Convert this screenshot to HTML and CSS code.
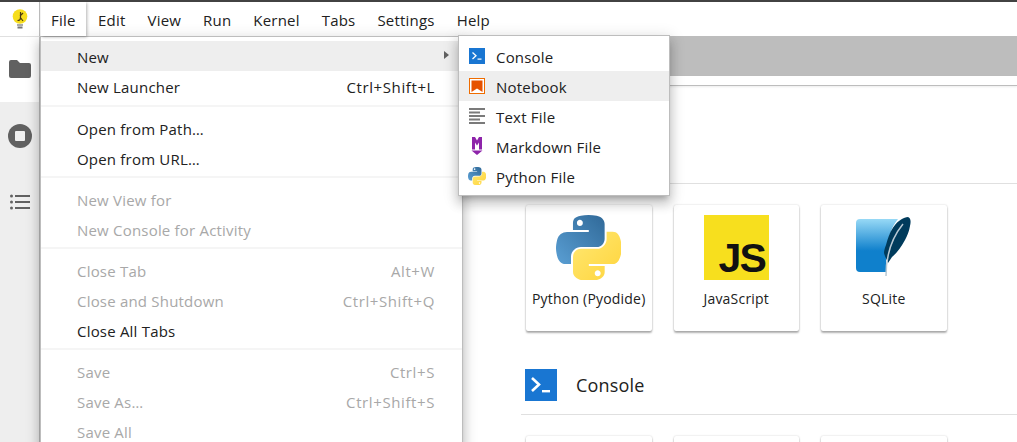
FILE: index.html
```html
<!DOCTYPE html>
<html lang="en">
<head>
<meta charset="utf-8">
<title>JupyterLite</title>
<link rel="stylesheet" href="styles.css">
</head>
<body>
<svg class="defs" width="0" height="0" aria-hidden="true">
  <defs>
    <linearGradient id="pyBlue" x1="0" y1="1" x2="1" y2="0"><stop offset="0" stop-color="#5a9fd4"/><stop offset="1" stop-color="#306998"/></linearGradient>
    <linearGradient id="pyYellow" x1="0" y1="0" x2="1" y2="1"><stop offset="0" stop-color="#ffe873"/><stop offset="1" stop-color="#ffd43b"/></linearGradient>
    <linearGradient id="sqBlue" x1="0" y1="0" x2="0" y2="1"><stop offset="0" stop-color="#97d9f6"/><stop offset=".6" stop-color="#0f80cc"/><stop offset="1" stop-color="#0f80cc"/></linearGradient>
    <symbol id="python" viewBox="0 0 110 110">
      <path fill="url(#pyBlue)" d="M54.919 0.001c-4.584 0.022-8.961 0.413-12.813 1.095C30.76 3.099 28.7 7.295 28.7 15.032v10.219h26.813v3.406H28.7H18.638c-7.793 0-14.616 4.684-16.75 13.594-2.462 10.213-2.571 16.586 0 27.25 1.906 7.938 6.458 13.594 14.25 13.594h9.219V70.845c0-8.85 7.657-16.656 16.75-16.656h26.781c7.455 0 13.406-6.138 13.406-13.625V15.032c0-7.266-6.13-12.725-13.406-13.937C64.282 0.328 59.502-0.02 54.919 0.001zm-14.5 8.219c2.77 0 5.031 2.299 5.031 5.125 0 2.816-2.262 5.094-5.031 5.094-2.779 0-5.031-2.277-5.031-5.094 0-2.826 2.252-5.125 5.031-5.125z"/>
      <path fill="url(#pyYellow)" d="M85.638 28.657V40.47c0 9.157-7.763 16.844-16.625 16.844H42.2c-7.344 0-13.406 6.285-13.406 13.625v25.531c0 7.266 6.319 11.54 13.406 13.625 8.487 2.496 16.625 2.947 26.781 0 6.75-1.955 13.406-5.888 13.406-13.625V86.251H55.575v-3.406h26.812 13.406c7.793 0 10.696-5.436 13.406-13.594 2.799-8.399 2.68-16.476 0-27.25-1.926-7.757-5.604-13.594-13.406-13.594H85.638zM70.575 93.313c2.779 0 5.031 2.277 5.031 5.094 0 2.826-2.252 5.125-5.031 5.125-2.77 0-5.031-2.299-5.031-5.125 0-2.816 2.262-5.094 5.031-5.094z"/>
    </symbol>
    <symbol id="console" viewBox="0 0 32 32">
      <rect width="32" height="32" fill="#1976d2"/>
      <path fill="none" stroke="#fff" stroke-width="2.6" d="M7 9l7 6.500-7 6.500"/>
      <rect x="17" y="21" width="8" height="2.400" fill="#fff"/>
    </symbol>
  </defs>
</svg>
<div class="app">
  <div class="topbar">
    <div class="logo-cell">
      <svg class="logo" viewBox="0 0 16 20" width="16" height="20">
        <circle cx="8" cy="7.500" r="7.300" fill="#f6dd1c"/>
        <rect x="5" y="15" width="6" height="2" fill="#aaa"/>
        <rect x="5.500" y="17.500" width="5" height="2" fill="#777"/>
        <path fill="none" stroke="#4a3a10" stroke-width="1.200" d="M8.500 3v6c0 2-1 2.500-3 2.500M8 7l3-3M8 8l3 4"/>
      </svg>
    </div>
    <nav class="menubar">
      <span class="menu-item is-open">File</span>
      <span class="menu-item">Edit</span>
      <span class="menu-item">View</span>
      <span class="menu-item">Run</span>
      <span class="menu-item">Kernel</span>
      <span class="menu-item">Tabs</span>
      <span class="menu-item">Settings</span>
      <span class="menu-item">Help</span>
    </nav>
  </div>
  <div class="body">
    <aside class="sidebar">
      <div class="side-tab side-tab-active">
        <svg viewBox="0 0 22 18" width="22" height="18"><path fill="#616161" d="M2 0h6l3 3h9a2 2 0 0 1 2 2v11a2 2 0 0 1-2 2H2a2 2 0 0 1-2-2V2a2 2 0 0 1 2-2z"/></svg>
      </div>
      <div class="side-tab">
        <svg viewBox="0 0 24 24" width="24" height="24"><circle cx="12" cy="12" r="12" fill="#616161"/><rect x="7" y="7" width="10" height="10" rx="1" fill="#f0f0f0"/></svg>
      </div>
      <div class="side-tab side-tab-list">
        <svg viewBox="0 0 20 16" width="20" height="16"><g fill="#616161"><circle cx="1.500" cy="2" r="1.500"/><circle cx="1.500" cy="8" r="1.500"/><circle cx="1.500" cy="14" r="1.500"/><rect x="5" y="1" width="15" height="2"/><rect x="5" y="7" width="15" height="2"/><rect x="5" y="13" width="15" height="2"/></g></svg>
      </div>
    </aside>
    <main class="main">
      <div class="tabbar"></div>
      <div class="tab-strip"></div>
      <div class="launcher">
        <div class="section-head section-head-first"></div>
        <div class="cards">
          <div class="card">
            <svg class="card-icon" width="65" height="65"><use href="#python"/></svg>
            <span class="card-label">Python (Pyodide)</span>
          </div>
          <div class="card">
            <div class="js-logo"><span>JS</span></div>
            <span class="card-label">JavaScript</span>
          </div>
          <div class="card">
            <svg class="card-icon" viewBox="0 0 65 65" width="65" height="65">
              <path fill="url(#sqBlue)" d="M9 4H47C40 12 35 28 35 44V57H9a4 4 0 0 1-4-4V8a4 4 0 0 1 4-4z"/>
              <path fill="#003b5c" d="M57 2c3 1 3 5 2 9-1 6-3 10-5 14-4 7-8 13-13 17l-4 6c-1-3-3-6-4-10 0-3 1-5 2-8 2-7 4-14 9-20 3-4 9-8 13-8z"/>
              <path fill="none" stroke="#b8c9d4" stroke-width="1.500" d="M52 9C43 20 35 36 35 61"/>
            </svg>
            <span class="card-label">SQLite</span>
          </div>
        </div>
        <div class="section-head">
          <svg width="32" height="32"><use href="#console"/></svg>
          <span class="section-title">Console</span>
        </div>
        <div class="cards">
          <div class="card"></div>
          <div class="card"></div>
          <div class="card"></div>
        </div>
      </div>
    </main>
  </div>

  <div class="menu file-menu">
    <div class="row is-active"><span>New</span><i class="caret"></i></div>
    <div class="row"><span>New Launcher</span><kbd>Ctrl+Shift+L</kbd></div>
    <hr class="sep-first">
    <div class="row"><span>Open from Path…</span></div>
    <div class="row"><span>Open from URL…</span></div>
    <hr>
    <div class="row is-off"><span>New View for</span></div>
    <div class="row is-off"><span>New Console for Activity</span></div>
    <hr>
    <div class="row is-off"><span>Close Tab</span><kbd>Alt+W</kbd></div>
    <div class="row is-off"><span>Close and Shutdown</span><kbd>Ctrl+Shift+Q</kbd></div>
    <div class="row"><span>Close All Tabs</span></div>
    <hr>
    <div class="row is-off"><span>Save</span><kbd>Ctrl+S</kbd></div>
    <div class="row is-off"><span>Save As…</span><kbd>Ctrl+Shift+S</kbd></div>
    <div class="row is-off"><span>Save All</span></div>
  </div>

  <div class="menu sub-menu">
    <div class="row">
      <svg class="row-icon" width="16" height="16"><use href="#console"/></svg><span>Console</span>
    </div>
    <div class="row is-active">
      <svg class="row-icon" viewBox="0 0 16 16" width="16" height="16"><rect x=".5" y=".5" width="15" height="15" fill="#fff" stroke="#ef6c00"/><path fill="#e65100" d="M2.500 2.500h11V14L8 10.500 2.500 14z"/></svg><span>Notebook</span>
    </div>
    <div class="row">
      <svg class="row-icon" viewBox="0 0 16 16" width="16" height="16"><g fill="#7a7a7a"><rect y="0" width="16" height="2"/><rect y="3.500" width="11" height="2"/><rect y="7" width="16" height="2"/><rect y="10.500" width="11" height="2"/><rect y="14" width="16" height="2"/></g></svg><span>Text File</span>
    </div>
    <div class="row">
      <svg class="row-icon" viewBox="0 0 16 18" width="16" height="18"><path fill="#8e24aa" d="M3 0h3L8 3.500 10 0h3v12.500h-3V5.500L8 8.500 6 5.500v7H3zM2.500 13.500h11L8 18z"/></svg><span>Markdown File</span>
    </div>
    <div class="row">
      <svg class="row-icon row-icon-lg" width="18" height="18"><use href="#python"/></svg><span>Python File</span>
    </div>
  </div>
</div>
</body>
</html>
```

FILE: styles.css
```css
* { box-sizing: border-box; }
html, body { margin: 0; height: 100%; overflow: hidden; }
body { font-family: "Open Sans", "Noto Sans", sans-serif; font-size: 15px; letter-spacing: .2px; color: #212121; background: #fff; }
.defs { position: absolute; }
.app { position: relative; width: 1017px; height: 442px; overflow: hidden; border-top: 2px solid #424242; }

.topbar { display: flex; height: 34px; }
.logo-cell { width: 40px; display: flex; align-items: center; justify-content: center; border-right: 1px solid #bdbdbd; }
.menubar { flex: 1; display: flex; padding-left: 1px; }
.menu-item { padding: 0 11px; line-height: 36px; height: 34px; }
.menu-item.is-open { position: relative; background: #fff; padding: 0 10px; margin-right: 1.500px; box-shadow: 1px 1px 3px rgba(0,0,0,.3); z-index: 7; }

.body { display: flex; height: 406px; }
.sidebar { width: 40px; background: #eee; border-top: 1px solid #e0e0e0; border-right: 1px solid #bdbdbd; display: flex; flex-direction: column; gap: 1px; }
.side-tab { flex: none; height: 66px; display: flex; align-items: center; justify-content: center; }
.side-tab-active { background: #fff; height: 65px; padding-bottom: 1px; }
.side-tab-list { margin-top: -1px; }
.main { flex: 1; display: flex; flex-direction: column; min-width: 0; }
.tabbar { flex: none; height: 40px; background: #bdbdbd; }
.tab-strip { flex: none; height: 10px; border-bottom: 1px solid #bdbdbd; box-shadow: 0 1px 2px rgba(0,0,0,.08); }
.launcher { flex: none; padding-left: 481px; }
.section-head { display: flex; align-items: center; gap: 19px; padding: 0 0 13px 4px; margin-bottom: 21px; border-bottom: 1px solid #e0e0e0; }
.section-head-first { height: 98px; padding: 0; }
.section-title { font-size: 18px; line-height: 32px; color: #212121; }
.cards { display: flex; gap: 22px; padding-left: 5px; margin-bottom: 38px; }
.card { flex: none; width: 125.500px; height: 126px; border-radius: 2px; background: #fff; box-shadow: 0 2px 2px rgba(0,0,0,.3), 0 0 2px rgba(0,0,0,.2); display: flex; flex-direction: column; align-items: center; padding-top: 10px; }
.card-icon { display: block; flex: none; }
.card-label { margin-top: 9px; font-size: 14px; line-height: 20px; }
.js-logo { flex: none; width: 65px; height: 65px; background: #f7df1e; display: flex; align-items: flex-end; justify-content: flex-end; padding: 0 4px 3px 0; }
.js-logo span { font-family: "Liberation Sans", sans-serif; font-weight: 700; font-size: 41px; line-height: 37px; letter-spacing: -2px; color: #111; }

.menu { position: absolute; background: #fff; border: 1px solid #bdbdbd; box-shadow: 0 5px 5px -3px rgba(0,0,0,.2), 0 8px 10px 1px rgba(0,0,0,.14), 0 3px 14px 2px rgba(0,0,0,.12); z-index: 5; }
.file-menu { left: 40px; top: 34px; width: 423px; padding: 4px 0; }
.sub-menu { left: 458px; top: 33px; width: 212px; padding: 5px 0 4px; z-index: 6; }
.row { height: 30px; padding: 1px 27px 0 36px; display: flex; align-items: center; justify-content: space-between; }
.row.is-active { background: #eee; }
.row.is-off { color: #a8a8a8; }
.row kbd { font: inherit; letter-spacing: .6px; }
.caret { width: 0; height: 0; border-left: 5px solid #616161; border-top: 4px solid transparent; border-bottom: 4px solid transparent; margin: -3px -14px 0 0; }
.menu hr { height: 2px; border: 0; margin: 3px 0 6px; background: #f5f5f5; }
.menu hr.sep-first { margin: 4px 0 6px; }
.sub-menu .row { padding: 1px 0 0 10px; justify-content: flex-start; gap: 11px; }
.row-icon { flex: none; margin-top: -1px; }
.row-icon-lg { margin-left: -1px; margin-right: -1px; }
```
